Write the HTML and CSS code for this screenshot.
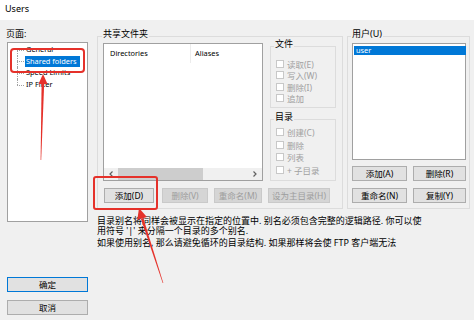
FILE: index.html
```html
<!DOCTYPE html>
<html lang="zh-CN">
<head>
    <meta charset="UTF-8">
    <title>Users</title>
    <link rel="stylesheet" href="styles.css">
</head>
<body>
<div class="window">
    <div class="titlebar">Users</div>

    <div class="dialog">
        <!-- Pages tree -->
        <div class="pages">
            <div class="caption">页面:</div>
            <div class="tree">
                <ul class="tree-list">
                    <li><span>General</span></li>
                    <li><span class="sel">Shared folders</span></li>
                    <li><span>Speed Limits</span></li>
                    <li><span>IP Filter</span></li>
                </ul>
            </div>
            <button class="btn btn-ok">确定</button>
            <button class="btn btn-cancel">取消</button>
        </div>

        <div class="main">
            <div class="groups">
                <!-- Shared folders -->
                <div class="group shared">
                    <div class="group-title">共享文件夹</div>
                    <div class="shared-body">
                        <div class="listview">
                            <div class="lv-head">
                                <div class="lv-col lv-dirs">Directories</div>
                                <div class="lv-col">Aliases</div>
                            </div>
                            <div class="hscroll">
                                <div class="sb-arrow">
                                    <svg width="4" height="6" viewBox="0 0 4 6"><path d="M3.5 0.5 L1 3 L3.5 5.5" fill="none" stroke="#606060" stroke-width="1.2"/></svg>
                                </div>
                                <div class="sb-thumb"></div>
                                <div class="sb-space"></div>
                                <div class="sb-arrow">
                                    <svg width="4" height="6" viewBox="0 0 4 6"><path d="M0.5 0.5 L3 3 L0.5 5.5" fill="none" stroke="#606060" stroke-width="1.2"/></svg>
                                </div>
                            </div>
                        </div>

                        <div class="perms">
                            <div class="group perm perm-file">
                                <div class="group-title">文件</div>
                                <div class="checks">
                                    <div class="check"><span class="cb"></span>读取(E)</div>
                                    <div class="check"><span class="cb"></span>写入(W)</div>
                                    <div class="check"><span class="cb"></span>删除(I)</div>
                                    <div class="check"><span class="cb"></span>追加</div>
                                </div>
                            </div>
                            <div class="group perm perm-dir">
                                <div class="group-title">目录</div>
                                <div class="checks">
                                    <div class="check"><span class="cb"></span>创建(C)</div>
                                    <div class="check"><span class="cb"></span>删除</div>
                                    <div class="check"><span class="cb"></span>列表</div>
                                    <div class="check"><span class="cb"></span>+ 子目录</div>
                                </div>
                            </div>
                        </div>
                    </div>

                    <div class="shared-btns">
                        <button class="btn b-add">添加(D)</button>
                        <button class="btn b-del" disabled>删除(V)</button>
                        <button class="btn b-ren" disabled>重命名(M)</button>
                        <button class="btn b-home" disabled>设为主目录(H)</button>
                    </div>
                </div>

                <!-- Users -->
                <div class="group users">
                    <div class="group-title">用户(U)</div>
                    <div class="userlist">
                        <div class="user-row">user</div>
                    </div>
                    <div class="user-btns">
                        <button class="btn">添加(A)</button>
                        <button class="btn">删除(R)</button>
                        <button class="btn">重命名(N)</button>
                        <button class="btn">复制(Y)</button>
                    </div>
                </div>
            </div>

            <div class="note">
                <p>目录别名将同样会被显示在指定的位置中. 别名必须包含完整的逻辑路径. 你可以使<br>用符号 '|' 来分隔一个目录的多个别名.</p>
                <p>如果使用别名, 那么请避免循环的目录结构. 如果那样将会使 FTP 客户端无法</p>
            </div>
        </div>
    </div>

    <!-- red annotations -->
    <svg class="annot" width="474" height="320" viewBox="0 0 474 320">
        <rect x="11" y="49" width="73" height="23" rx="3" fill="none" stroke="#e5312a" stroke-width="2"/>
        <rect x="94" y="177" width="63" height="32" rx="2" fill="none" stroke="#e5312a" stroke-width="2"/>
        <polygon points="43,74 38.5,84 47.5,84" fill="#e5312a"/>
        <polygon points="41.6,83 44.2,83 41.2,160 40.6,160" fill="#e5312a"/>
        <polygon points="139,208 137.3,220 146.9,217" fill="#e5312a"/>
        <polygon points="140.9,218.9 143.3,218.1 163.3,282.9 162.7,283.1" fill="#e5312a"/>
    </svg>
</div>
</body>
</html>
```

FILE: styles.css
```css
* {
    box-sizing: border-box;
}

body {
    margin: 0;
    background: #f0f0f0;
    color: #000;
    font-family: "Noto Sans", "Noto Sans CJK SC", sans-serif;
}

.window {
    position: relative;
    width: 474px;
    height: 320px;
    background: #f0f0f0;
    overflow: hidden;
}

.titlebar {
    height: 20px;
    line-height: 18px;
    padding-left: 5px;
    background: #fff;
    font-size: 9px;
}

.dialog {
    display: flex;
    height: 300px;
    padding-left: 7px;
}

/* Left column */
.pages {
    width: 81px;
    display: flex;
    flex-direction: column;
}

.caption {
    margin-top: 8px;
    margin-left: -1px;
    font-size: 9px;
    line-height: 12px;
}

.tree {
    margin-top: 2px;
    height: 180px;
    background: #fff;
    border: 1px solid #a0a0a0;
    padding-top: 1px;
}

.tree-list {
    list-style: none;
    margin: 0 0 0 9px;
    padding: 0;
}

.tree-list li {
    position: relative;
    height: 11.67px;
    line-height: 11.67px;
    padding-left: 8px;
    font-size: 7.4px;
    white-space: nowrap;
}

.tree-list li::before {
    content: "";
    position: absolute;
    left: 0;
    top: 0;
    bottom: 0;
    border-left: 1px dotted #a0a0a0;
}

.tree-list li:first-child::before {
    top: 50%;
}

.tree-list li:last-child::before {
    bottom: 50%;
}

.tree-list li::after {
    content: "";
    position: absolute;
    left: 0;
    top: 50%;
    width: 7px;
    border-top: 1px dotted #a0a0a0;
}

.tree-list span {
    display: inline-block;
    padding: 0 1px;
    line-height: 11px;
}

.tree-list .sel {
    background: #0078d7;
    color: #fff;
    padding-right: 3px;
}

/* Buttons */
.btn {
    height: 15px;
    padding: 0;
    font-family: "Noto Sans", "Noto Sans CJK SC", sans-serif;
    font-size: 8.5px;
    line-height: 13px;
    color: #000;
    background: #e1e1e1;
    border: 1px solid #adadad;
    text-align: center;
    white-space: nowrap;
}

.btn:disabled {
    background: #d5d5d5;
    border-color: #c9c9c9;
    color: #9d9d9d;
}

.btn-ok {
    margin-top: 55px;
    border-color: #0078d7;
}

.btn-cancel {
    margin-top: 8px;
}

/* Main column */
.main {
    margin-left: 9px;
    width: 373px;
}

.groups {
    display: flex;
    margin-top: 16px;
}

.group {
    border: 1px solid #dcdcdc;
}

.group-title {
    width: fit-content;
    margin-top: -9px;
    margin-left: -1px;
    padding: 0 1px;
    background: #f0f0f0;
    font-size: 9px;
    line-height: 12px;
    white-space: nowrap;
}

.shared {
    width: 246px;
    padding: 0 0 5px 5px;
}

.shared-body {
    display: flex;
    margin-top: 3px;
}

.listview {
    width: 160px;
    height: 138px;
    background: #fff;
    border: 1px solid #a0a0a0;
    display: flex;
    flex-direction: column;
}

.lv-head {
    display: flex;
    height: 19px;
    line-height: 19px;
    font-size: 7.4px;
}

.lv-col {
    padding-left: 4px;
}

.lv-dirs {
    width: 87px;
    padding-left: 6px;
    border-right: 1px solid #ececec;
}

.hscroll {
    margin-top: auto;
    height: 12px;
    display: flex;
    background: #f0f0f0;
}

.sb-arrow {
    width: 14px;
    display: flex;
    align-items: center;
    justify-content: center;
}

.sb-thumb {
    width: 85px;
    background: #cdcdcd;
}

.sb-space {
    flex: 1;
}

/* Permission groups */
.perms {
    margin-left: 7px;
    width: 66px;
}

.perm {
    padding-left: 5px;
}

.perm .group-title {
    margin-left: -2px;
}

.perm-file {
    margin-top: 3px;
}

.perm-file .checks {
    padding: 8px 0 3px;
}

.perm-file .check {
    height: 11.5px;
}

.perm-dir {
    margin-top: 11px;
}

.perm-dir .checks {
    padding: 3px 0 4px;
}

.perm-dir .check {
    height: 12.5px;
}

.check {
    display: flex;
    align-items: center;
    font-size: 8.5px;
    color: #a0a0a0;
    white-space: nowrap;
}

.cb {
    width: 8px;
    height: 8px;
    margin-right: 3px;
    background: #fff;
    border: 1px solid #c8c8c8;
}

.shared-btns {
    display: flex;
    margin-top: 7px;
}

.b-add { width: 50px; margin-left: 1px; }
.b-del { width: 46px; margin-left: 8px; }
.b-ren { width: 48px; margin-left: 6px; }
.b-home { width: 62px; margin-left: 6px; }

/* Users group */
.users {
    width: 123px;
    margin-left: 4px;
    padding: 0 0 5px 4px;
}

.userlist {
    margin-top: 3px;
    width: 114px;
    height: 117px;
    background: #fff;
    border: 1px solid #a0a0a0;
    padding: 2px 0 0 1px;
}

.user-row {
    width: 112px;
    height: 9px;
    line-height: 9px;
    padding-left: 2px;
    background: #0078d7;
    color: #fff;
    font-size: 7.4px;
}

.user-btns {
    display: grid;
    grid-template-columns: 55px 53px;
    column-gap: 6px;
    row-gap: 7px;
    margin-top: 6px;
}

/* Note */
.note {
    margin-top: 7px;
    font-size: 9px;
    line-height: 10px;
    white-space: nowrap;
}

.note p {
    margin: 0 0 2px;
}

/* Annotations */
.annot {
    position: absolute;
    left: 0;
    top: 0;
    pointer-events: none;
}
```
